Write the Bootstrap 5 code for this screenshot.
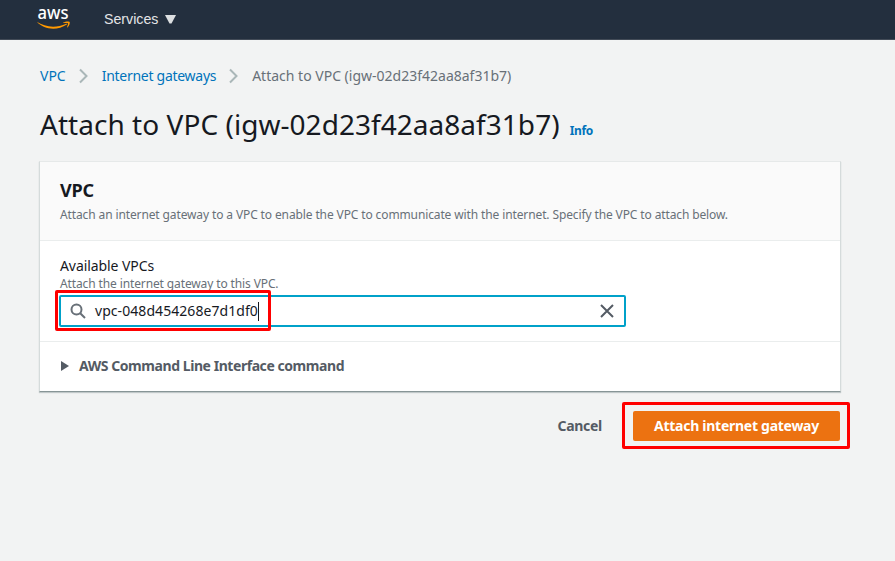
<!DOCTYPE html>
<html lang="en">
<head>
<meta charset="utf-8">
<meta name="viewport" content="width=device-width, initial-scale=1">
<title>Attach to VPC</title>
<link href="https://cdn.jsdelivr.net/npm/bootstrap@5.3.0/dist/css/bootstrap.min.css" rel="stylesheet">
<style>
body{background:#f2f3f3;color:#16191f;font:14px/22px "Noto Sans",sans-serif;height:561px;overflow:hidden}
a{color:#0073bb;text-decoration:none}
.topbar{height:40px;background:#232f3e;border-bottom:1px solid #424b57;padding-left:36px}
.brand{width:34px;height:24px;margin-top:-3px;overflow:visible}
.services{font:14.2px/20px "Liberation Sans",sans-serif;color:#e3e5e7;margin:-2px 7px 0 34px}
.page{width:802px;margin-left:39px;padding-top:25px}
.crumbs{height:22px;padding-left:1px;font-size:14px}
.crumbs svg{margin:0 12px 0 11px}
.crumb-current{color:#687078}
.t-gateways{letter-spacing:-.28px}
.title{font-size:28px;line-height:36px;font-weight:400;margin-top:19px;height:55px;padding-left:1px}
.t-title{letter-spacing:.04px}
.info{font-size:12px;font-weight:700;margin-left:10px;letter-spacing:-.3px}
.panel{border:1px solid #d5dbdb;border-top-color:#e6e9e9;border-bottom-color:#879596;border-radius:0;height:231px;box-shadow:0 1px 1px rgba(0,28,36,.2)}
.panel-head{height:79px;background:#fafafa;border-bottom:1px solid #eaeded;padding:17px 20px 0}
.panel-head h2{font-size:18px;line-height:22px;font-weight:700;margin:0 0 5px;letter-spacing:-.2px}
.hint{font-size:12px;line-height:18px;color:#687078}
.t-desc{letter-spacing:-.12px}
.t-hint{letter-spacing:-.12px;line-height:14px;padding-bottom:2px}
.t-label{letter-spacing:-.08px}
.t-value{margin-left:9px;letter-spacing:.06px}
.t-cli{margin-left:9px;letter-spacing:-.44px}
.panel-main{height:101px;border-bottom:1px solid #eaeded;padding:14px 20px 0}
.search{width:567px;height:32px;border:2px solid #00a1c9;border-radius:2px;padding:0 9px;margin:2px 0 0 -1px}
.caret{width:1px;height:19px;background:#16191f}
.expander{height:48px;padding-left:20px;color:#545b64;font-weight:700}
.mark-red{border:3px solid #f00;border-radius:2px}
.field-mark{left:-6px;top:-7px;width:216px;height:41px}
.actions{margin-top:10px;margin-right:-9px;height:47px}
.cancel{color:#545b64;font-weight:700;margin-right:20px;letter-spacing:-.28px}
.btn-mark{padding:6px 7px 5px 8px;width:228px;height:47px}
.btn-attach,.btn-attach:hover{background:#ec7211;border:0;border-radius:2px;color:#fff;font-size:14px;font-weight:700;height:30px;padding:0;line-height:30px;letter-spacing:-.27px}
</style>
<script src="https://cdn.jsdelivr.net/npm/bootstrap@5.3.0/dist/js/bootstrap.bundle.min.js"></script>
</head>
<body>
<header class="topbar d-flex align-items-center">
<svg class="brand" viewBox="0 0 34 24" role="img" aria-label="aws"><text x="1.500" y="13" textLength="31" lengthAdjust="spacingAndGlyphs" font-family="Noto Sans, sans-serif" font-size="18.500" font-weight="500" fill="#fff">aws</text><path d="M.8 15.800C9 21.300 20 22.300 30.300 17.800q1-.2.600.8C21 25 8.500 24 .8 15.800Z" fill="#f90"/><path d="M27.200 16.500c2-1.200 6-1.500 6.500-.6.500 1-.6 4.300-2.300 5.600q-.7.200-.3-.6c.7-1.700 1.100-3 .8-3.600-.3-.5-2.300-.4-4.200-.2q-1-.100-.5-.6Z" fill="#f90"/></svg>
<span class="services">Services</span><svg width="11" height="9" viewBox="0 0 11 9"><path d="M0 0h11L6.500 8.500h-2z" fill="#dcdfe1"/></svg>
</header>
<main class="page">
<nav class="crumbs d-flex align-items-center" aria-label="Breadcrumb">
<a href="#">VPC</a>
<svg width="13" height="16" viewBox="0 0 13 16"><path d="M3 1.500 9.500 8 3 14.500" fill="none" stroke="#aab7b8" stroke-width="2"/></svg>
<a href="#" class="t-gateways">Internet gateways</a>
<svg width="13" height="16" viewBox="0 0 13 16"><path d="M3 1.500 9.500 8 3 14.500" fill="none" stroke="#aab7b8" stroke-width="2"/></svg>
<span class="crumb-current">Attach to VPC (igw-02d23f42aa8af31b7)</span>
</nav>
<h1 class="title d-flex align-items-baseline mb-0 text-nowrap"><span class="t-title">Attach to VPC (igw-02d23f42aa8af31b7)</span><a href="#" class="info">Info</a></h1>
<section class="card panel">
<div class="panel-head"><h2>VPC</h2><div class="hint text-nowrap"><span class="t-desc">Attach an internet gateway to a VPC to enable the VPC to communicate with the internet. Specify the VPC to attach below.</span></div></div>
<div class="panel-main">
<div class="t-label">Available VPCs</div>
<div class="hint t-hint">Attach the internet gateway to this VPC.</div>
<div class="search position-relative d-flex align-items-center">
<svg width="16" height="16" viewBox="0 0 16 16" fill="none" stroke="#687078" stroke-width="2"><circle cx="6.500" cy="6.500" r="5"/><path d="m10.200 10.200 4.800 4.800"/></svg>
<span class="t-value">vpc-048d454268e7d1df0</span><span class="caret"></span>
<svg class="ms-auto" width="16" height="16" viewBox="0 0 16 16"><path d="m2 2 12 12M14 2 2 14" stroke="#545b64" stroke-width="2"/></svg>
<div class="mark-red field-mark position-absolute"></div>
</div>
</div>
<div class="expander d-flex align-items-center"><svg width="10" height="10" viewBox="0 0 10 10"><path d="M1 0v10l8-5z" fill="#545b64"/></svg><span class="t-cli">AWS Command Line Interface command</span></div>
</section>
<div class="actions d-flex justify-content-end align-items-center"><a href="#" class="cancel">Cancel</a><div class="mark-red btn-mark"><button class="btn btn-attach w-100">Attach internet gateway</button></div></div>
</main>
</body>
</html>
